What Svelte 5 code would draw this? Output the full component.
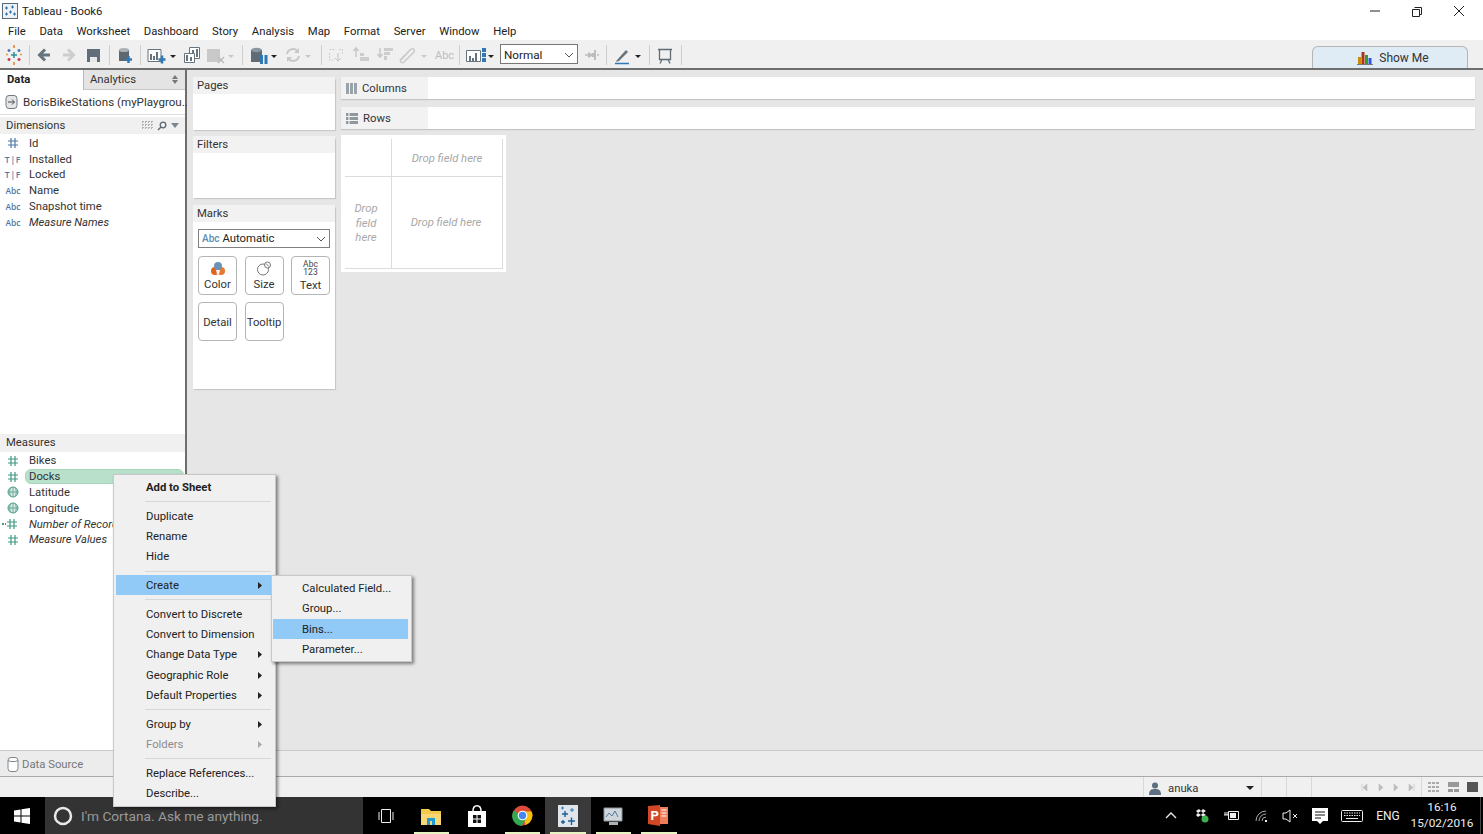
<script>
  const menus = ['File','Data','Worksheet','Dashboard','Story','Analysis','Map','Format','Server','Window','Help'];
  const dims = [
    {t:'#',n:'Id'},{t:'tf',n:'Installed'},{t:'tf',n:'Locked'},{t:'abc',n:'Name'},{t:'abc',n:'Snapshot time'},{t:'abc',n:'Measure Names',i:true}
  ];
  const meas = [
    {t:'#',n:'Bikes'},{t:'#',n:'Docks',sel:true},{t:'globe',n:'Latitude'},{t:'globe',n:'Longitude'},{t:'#e',n:'Number of Records',i:true},{t:'#',n:'Measure Values',i:true}
  ];
  const menuGroups = [
    [{n:'Add to Sheet',b:true}],
    [{n:'Duplicate'},{n:'Rename'},{n:'Hide'}],
    [{n:'Create',a:true,h:true}],
    [{n:'Convert to Discrete'},{n:'Convert to Dimension'},{n:'Change Data Type',a:true},{n:'Geographic Role',a:true},{n:'Default Properties',a:true}],
    [{n:'Group by',a:true},{n:'Folders',a:true,d:true}],
    [{n:'Replace References...'},{n:'Describe...'}]
  ];
  const sub = [{n:'Calculated Field...'},{n:'Group...'},{n:'Bins...',h:true},{n:'Parameter...'}];
</script>

{#snippet hash(color)}
  <svg class="ficon" width="14" height="12" viewBox="0 0 14 12"><path d="M2 4h10M2 8h10M5 1v10M9 1v10" stroke={color} stroke-width="1.2" fill="none"/></svg>
{/snippet}

{#snippet fieldIcon(t, blue)}
  <span class="fslot">
    {#if t === '#'}
      {@render hash(blue ? '#4e79a7' : '#3f9a82')}
    {:else if t === '#e'}
      <svg class="ficon wide" width="18" height="12" viewBox="0 0 18 12"><path d="M1 5h2v2H1zM4 5h1v2H4z" fill="#3f9a82"/><path d="M6 4h10M6 8h10M9 1v10M13 1v10" stroke="#3f9a82" stroke-width="1.2" fill="none"/></svg>
    {:else if t === 'globe'}
      <svg class="ficon" width="14" height="12" viewBox="0 0 14 12"><circle cx="7" cy="6" r="5" fill="#dcebe6" stroke="#4f9d88"/><path d="M2 6h10M7 1v10M4.500 2c-1 2.500-1 5.500 0 8M9.500 2c1 2.500 1 5.500 0 8" stroke="#4f9d88" stroke-width=".8" fill="none"/></svg>
    {:else if t === 'tf'}
      <span class="tf">T|F</span>
    {:else}
      <span class="abc">Abc</span>
    {/if}
  </span>
{/snippet}

<div class="win">
  <div class="title">
    <svg class="appicon" width="16" height="16" viewBox="0 0 16 16"><rect x=".5" y=".5" width="15" height="15" fill="#eef1f5" stroke="#5b6b7c"/><path d="M3 5h3M4.500 3.500v3M9 4h3M10.500 2.500v3M7 9h3M8.500 7.500v3M3 11h3M4.500 9.500v3M11 11h3M12.500 9.500v3" stroke="#2c6fa8"/></svg>
    <span>Tableau - Book6</span>
    <div class="winbtns">
      <svg width="42" height="20" viewBox="0 0 42 20"><path d="M16 10h10" stroke="#222"/></svg>
      <svg width="42" height="20" viewBox="0 0 42 20"><path d="M18.500 6.500h7v7h-2M16.500 8.500h7v7h-7z" stroke="#222" fill="#fff"/></svg>
      <svg width="42" height="20" viewBox="0 0 42 20"><path d="M16 5l10 10M26 5L16 15" stroke="#222"/></svg>
    </div>
  </div>
  <div class="menubar">
    {#each menus as m}<span class="mi">{m}</span>{/each}
  </div>
  <div class="toolbar">
    <svg width="500" height="28" viewBox="0 0 500 28" class="strip">
      <g stroke-width="1.500" fill="none">
        <path d="M14 5v3M14 22v3" stroke="#e8792b"/><path d="M9 9v3M7.500 10.500h3M19 9v3M17.500 10.500h3" stroke="#4e79a7"/>
        <path d="M9 18v3M7.500 19.500h3M19 18v3M17.500 19.500h3" stroke="#c8374a"/><path d="M11 15h6M14 12v6" stroke="#2c8f96"/>
        <path d="M8 14.500h-2M22 14.500h-2" stroke="#e0a030"/>
      </g>
      <path d="M29.500 5v20M109.500 5v20M140.500 5v20M242.500 5v20M321.500 5v20M459.500 5v20" stroke="#cfcfcf"/>
      <path d="M50 15H40M45 9.500L39.500 15l5.500 5.500" stroke="#66747f" stroke-width="3" fill="none"/>
      <path d="M63 15h10M68 9.500l5.500 5.500-5.500 5.500" stroke="#cdcdcd" stroke-width="3" fill="none"/>
      <path d="M87 9h13v13H87z" fill="#616e79"/><path d="M90 17h7v5h-7z" fill="#e8e8e8"/>
      <path d="M119 10h10v11h-10z" fill="#5c6770"/><ellipse cx="124" cy="10" rx="5" ry="2" fill="#aab1b7"/>
      <path d="M128.500 16v7M125 19.500h7" stroke="#2f78b5" stroke-width="2.500"/>
      <path d="M148 9.500h13v12h-13z" fill="#fff" stroke="#66747f"/><path d="M150 14h2v6h-2zM153 16h2v4h-2zM156 12h2v8h-2z" fill="#66747f"/>
      <path d="M162 15.500v8M158.500 19.500h7" stroke="#2f78b5" stroke-width="2.500"/>
      <path d="M170 15h6l-3 3z" fill="#222"/>
      <path d="M189.500 7.500h10v11h-10z" fill="#fff" stroke="#66747f"/><path d="M184.500 13.500h10v9h-10z" fill="#fff" stroke="#66747f"/>
      <path d="M186 15h2v6h-2zM190 17h2v4h-2zM192 10h2v3h-2zM196 9h2v8h-2z" fill="#66747f"/>
      <path d="M207 9h13v13h-13z" fill="#c9c9c9"/><path d="M218 17l6 6M224 17l-6 6" stroke="#bdbdbd" stroke-width="1.500"/>
      <path d="M228 15h6l-3 3z" fill="#c8c8c8"/>
      <path d="M251 10h11v12h-11z" fill="#5f6b75"/><ellipse cx="256.500" cy="10" rx="5.500" ry="2.200" fill="#8b959d"/>
      <path d="M260 15h3v9h-3zM264.500 15h3v9h-3z" fill="#2f78b5"/>
      <path d="M271 15h6l-3 3z" fill="#222"/>
      <path d="M287 14a6 6 0 0 1 11-2M299 16a6 6 0 0 1-11 2" stroke="#c9c9c9" stroke-width="2" fill="none"/><path d="M299 8v5h-5zM287 22v-5h5z" fill="#c9c9c9"/>
      <path d="M305 15h6l-3 3z" fill="#c8c8c8"/>
      <path d="M329.500 9.500h6M339 9.500h3.500v5M329.500 13v7h4" stroke="#cfcfcf" stroke-dasharray="2 1" fill="none"/><path d="M338 13v8M335 18l3 3 3-3" stroke="#c4c4c4" fill="none"/>
      <path d="M356 8v9M353.500 11l2.500-3 2.500 3" stroke="#c8c8c8" stroke-width="1.500" fill="none"/><path d="M360 13h4v3h-4zM360 17h9v4h-9z" fill="#cdcdcd"/>
      <path d="M380 8v9M377.500 14l2.500 3 2.500-3" stroke="#c8c8c8" stroke-width="1.500" fill="none"/><path d="M384 8h9v3h-9zM384 12h6v3h-6zM384 16h3v4h-3z" fill="#cdcdcd"/>
      <path d="M401 20l9-10c3-3 6 0 3 3l-9 9c-2 2-5-1-3-3l8-8" stroke="#c9c9c9" stroke-width="1.400" fill="none"/>
      <path d="M421 15h6l-3 3z" fill="#c8c8c8"/>
      <text x="435" y="19" class="abct">Abc</text>
      <path d="M466.500 10.500h14v11h-14z" fill="#fff" stroke="#66747f"/><path d="M469 16h2v5h-2zM472 18h2v3h-2zM475 13h2v8h-2z" fill="#66747f"/>
      <path d="M482 8h4v4h-4zM482 13h4v4h-4zM482 18h4v4h-4z" fill="#2f78b5"/>
      <path d="M488 15h6l-3 3z" fill="#222"/>
    </svg>
    <div class="normal"><span>Normal</span>
      <svg width="10" height="6" viewBox="0 0 10 6"><path d="M1 1l4 4 4-4" stroke="#555" fill="none"/></svg>
    </div>
    <svg width="110" height="28" viewBox="578 0 110 28" class="strip">
      <path d="M585 15h3M597 15h2" stroke="#bdbdbd" stroke-width="1.500"/><path d="M588 12l4 2v2l-4 2zM594 10h2v10h-2zM592 13h2v4h-2z" fill="#bdbdbd"/>
      <path d="M606.500 5v20M649.500 5v20M681.500 5v20" stroke="#cfcfcf"/>
      <path d="M617 20l9-10 2 2-9 9-3 1z" fill="#66747f"/><path d="M615 23.500h14" stroke="#2f78b5" stroke-width="1.500"/>
      <path d="M635 15h6l-3 3z" fill="#222"/>
      <path d="M658 9.500h14M659.500 10v9.500h11V10M662 19.500l-2 4M668 19.500l2 4" stroke="#5f6b75" stroke-width="1.300" fill="none"/>
    </svg>
    <div class="showme">
      <svg width="16" height="14" viewBox="0 0 16 14"><path d="M1 6h3v7H1z" fill="#c98a10"/><path d="M4.500 1h3v12h-3z" fill="#b0341a"/><path d="M8 4h3v9H8z" fill="#2da02d"/><path d="M11.500 7h3v6h-3z" fill="#3252e0"/><path d="M0 13.500h16" stroke="#777"/></svg>
      <span>Show Me</span>
    </div>
  </div>

  <div class="body">
    <aside class="left">
      <div class="tabs">
        <div class="tab on">Data</div>
        <div class="tab off">Analytics<svg width="6" height="9" viewBox="0 0 6 9"><path d="M0 4l3-4 3 4zM0 5l3 4 3-4z" fill="#777"/></svg></div>
      </div>
      <div class="source">
        <svg width="14" height="14" viewBox="0 0 14 14"><rect x="1" y=".5" width="11" height="13" rx="3" fill="#e6e6e6" stroke="#6f7a84"/><path d="M3 7h6M7 4.500L9.500 7 7 9.500" stroke="#3f4a54" fill="none"/></svg>
        <span>BorisBikeStations (myPlaygrou...</span>
      </div>
      <div class="sect dims">
        <div class="shead"><span>Dimensions</span>
          <span class="tools">
            <svg width="11" height="9" viewBox="0 0 11 9"><path d="M0 .5h11M0 3.500h11M0 6.500h11M.5 0v8M3.500 0v8M6.500 0v8M9.500 0v8" stroke="#b0b0b0" stroke-dasharray="2 1"/></svg>
            <svg width="10" height="10" viewBox="0 0 10 10"><circle cx="6" cy="4" r="2.800" stroke="#5c6770" fill="none" stroke-width="1.300"/><path d="M4 6L1 9" stroke="#5c6770" stroke-width="1.500"/></svg>
            <svg width="8" height="5" viewBox="0 0 8 5"><path d="M0 0h8L4 5z" fill="#7c8790"/></svg>
          </span>
        </div>
        {#each dims as f}
          <div class="field">
            {@render fieldIcon(f.t, true)}
            <span class="fname" class:it={f.i}>{f.n}</span>
          </div>
        {/each}
      </div>
      <div class="sect meas">
        <div class="shead"><span>Measures</span></div>
        {#each meas as f}
          <div class="field">
            {@render fieldIcon(f.t, false)}
            <span class="fname" class:it={f.i} class:sel={f.sel}>{f.n}</span>
          </div>
        {/each}
      </div>
    </aside>
    <main class="work">
      <div class="cards">
        <section class="card pages"><h4>Pages</h4></section>
        <section class="card filters"><h4>Filters</h4></section>
        <section class="card marks">
          <h4>Marks</h4>
          <div class="mdrop"><span class="abc2">Abc</span><span>Automatic</span>
            <svg width="10" height="6" viewBox="0 0 10 6"><path d="M1 1l4 4 4-4" stroke="#555" fill="none"/></svg>
          </div>
          <div class="mgrid">
            <div class="mbtn">
              <svg width="16" height="15" viewBox="0 0 16 15"><circle cx="5" cy="10" r="4" fill="#e0641e"/><circle cx="11" cy="10" r="4" fill="#e8782b"/><path d="M6 9h4l-1 4H7z" fill="#f7f7f7"/><circle cx="8" cy="5" r="4" fill="#6b93b8"/></svg>
              <span>Color</span>
            </div>
            <div class="mbtn">
              <svg width="16" height="15" viewBox="0 0 16 15"><circle cx="7" cy="8.500" r="5.500" fill="none" stroke="#777"/><circle cx="11.500" cy="4" r="3" fill="#fff" stroke="#777"/><path d="M10 2.500l3 3" stroke="#777"/></svg>
              <span>Size</span>
            </div>
            <div class="mbtn">
              <span class="a123"><span>Abc</span><span>123</span></span>
              <span>Text</span>
            </div>
            <div class="mbtn low"><span>Detail</span></div>
            <div class="mbtn low"><span>Tooltip</span></div>
          </div>
        </section>
      </div>
      <div class="canvas">
        <div class="shelf"><span class="slabel"><svg width="11" height="11" viewBox="0 0 11 11"><path d="M0 0h3v11H0zM4 0h3v11H4zM8 0h3v11H8z" fill="#9aa3aa"/></svg>Columns</span></div>
        <div class="shelf"><span class="slabel"><svg width="12" height="11" viewBox="0 0 12 11"><path d="M0 0h12v3H0zM0 4h12v3H0zM0 8h12v3H0z" fill="#8f989f"/><path d="M3 0v11" stroke="#fff"/></svg>Rows</span></div>
        <div class="viz">
          <div class="cell c1"></div>
          <div class="cell c2">Drop field here</div>
          <div class="cell c3"><span>Drop</span><span>field</span><span>here</span></div>
          <div class="cell c4">Drop field here</div>
        </div>
      </div>
    </main>
  </div>

  <div class="sheetbar">
    <span class="dsrc">
      <svg width="12" height="15" viewBox="0 0 12 15"><rect x="1" y=".5" width="10" height="14" rx="3" fill="#fff" stroke="#7c868e"/><path d="M1 3.500c2 1.500 8 1.500 10 0" stroke="#7c868e" fill="none"/></svg>
      <span>Data Source</span>
    </span>
  </div>
  <div class="status">
    <span class="gap1"></span>
    <span class="user">
      <svg width="12" height="13" viewBox="0 0 12 13"><circle cx="6" cy="3.500" r="3" fill="#5d6f80"/><path d="M0 13c0-5 2-6 6-6s6 1 6 6z" fill="#5d6f80"/></svg>
      <span>anuka</span>
      <svg class="push" width="8" height="4" viewBox="0 0 8 4"><path d="M0 0h8L4 4z" fill="#222"/></svg>
    </span>
    <span class="sb s25"></span>
    <span class="sb s25"></span>
    <span class="sb nav">
      <svg width="110" height="19" viewBox="0 0 110 19">
        <path d="M50 6v7M51 9.500l4-3.500v7zM71 9.500L67 6v7zM82 6l4 3.500-4 3.500zM97 6l4 3.500-4 3.500zM102 6v7" fill="#bcbcbc" stroke="#bcbcbc" stroke-width=".6"/>
      </svg>
    </span>
    <span class="sb views">
      <svg width="60" height="12" viewBox="0 0 60 12"><path d="M6 1h3v2H6zM10 1h3v2h-3zM14 1h3v2h-3zM6 5h3v2H6zM10 5h3v2h-3zM14 5h3v2h-3zM6 9h3v2H6zM10 9h3v2h-3zM14 9h3v2h-3z" fill="#aaa"/><path d="M26 1h11v5H26zM26 8h5v3h-5zM32 8h5v3h-5z" fill="#999"/><path d="M45 1h11v10H45z" fill="#555"/></svg>
    </span>
  </div>

  <div class="taskbar">
    <div class="start">
      <svg width="16" height="16" viewBox="0 0 16 16"><path d="M0 2.500l6.500-1v6H0zM7.500 1.300L16 0v7.500H7.500zM0 8.500h6.500v6l-6.500-1zM7.500 8.500H16V16l-8.500-1.300z" fill="#fff"/></svg>
    </div>
    <div class="cortana">
      <svg width="20" height="20" viewBox="0 0 20 20"><circle cx="10" cy="10" r="8" fill="none" stroke="#e8e8e8" stroke-width="2.500"/></svg>
      <span>I'm Cortana. Ask me anything.</span>
    </div>
    <div class="tk">
      <svg width="20" height="16" viewBox="0 0 20 16"><path d="M5.500 1.500h9v13h-9zM3 4v8M17 4v8" stroke="#eee" fill="none"/></svg>
    </div>
    <div class="tk run">
      <svg width="22" height="20" viewBox="0 0 22 20"><path d="M1 3h8l2 2h10v14H1z" fill="#f2c94c"/><path d="M1 8h20v11H1z" fill="#f7d774"/><path d="M7 12h8v7h-3v-4h-2v4H7z" fill="#1c9ad6"/></svg>
    </div>
    <div class="tk">
      <svg width="20" height="22" viewBox="0 0 20 22"><path d="M1 6h18v16H1z" fill="#fff"/><path d="M6 6c0-7 8-7 8 0" stroke="#fff" stroke-width="1.500" fill="none"/><path d="M6 10h3.500v3.500H6zM10.500 10H14v3.500h-3.500zM6 14.500h3.500V18H6zM10.500 14.500H14V18h-3.500z" fill="#111"/></svg>
    </div>
    <div class="tk run">
      <svg width="21" height="21" viewBox="0 0 21 21"><circle cx="10.500" cy="10.500" r="10" fill="#dd4b39"/><path d="M10.500 6.500h9a10 10 0 0 1-6 13.500z" fill="#f4c20d"/><path d="M1.800 5.500a10 10 0 0 0 8 15.500l4-7z" fill="#34a853"/><circle cx="10.500" cy="10.500" r="4.800" fill="#fff"/><circle cx="10.500" cy="10.500" r="3.700" fill="#4285f4"/></svg>
    </div>
    <div class="tk run active">
      <svg width="20" height="22" viewBox="0 0 20 22"><path d="M0 0h20v22H0z" fill="#dfe5ea"/><g stroke="#1c5f96" stroke-width="1.400"><path d="M4 9h6M7 6v6M10 16h7M13.500 12.500V20M3 17h4M5 15v4"/></g><g stroke="#2f7db5"><path d="M12 5h4M14 3v4M3 3h3M4.500 1.500v3"/></g></svg>
    </div>
    <div class="tk run">
      <svg width="20" height="20" viewBox="0 0 20 20"><path d="M1 2h18v13H1z" fill="#cfd6dc" stroke="#8a949c"/><path d="M3 11l3-4 3 3 3-5 3 6" stroke="#4f7ba0" fill="none"/><path d="M6 16h9v3H6z" fill="#aab1b7"/></svg>
    </div>
    <div class="tk run">
      <svg width="21" height="21" viewBox="0 0 21 21"><path d="M7 2h13v17H7z" fill="#ef7d5a"/><path d="M0 1l12-1v21L0 19z" fill="#d24726"/><path d="M13.500 5h5M13.500 8h5M13.500 11h5" stroke="#fff"/><text x="2.500" y="15" class="pp">P</text></svg>
    </div>
    <div class="tray">
      <svg width="30" height="37" viewBox="0 0 30 37"><path d="M10 21l5-5 5 5" stroke="#eee" stroke-width="1.300" fill="none"/></svg>
      <svg width="30" height="37" viewBox="0 0 30 37"><path d="M10 14l3-2 2 2-3 2zM15 14l2-2 3 2-3 2zM10 18l2-2 3 2-3 2zM15 18l2-2 3 2-3 2z" fill="#eee"/><circle cx="19" cy="22" r="3.500" fill="#3cb04a"/></svg>
      <svg width="30" height="37" viewBox="0 0 30 37"><path d="M12.500 14.500h10v8h-10z" stroke="#eee" fill="none"/><path d="M14 16h6v5h-6z" fill="#eee"/><path d="M8 18h4M9 15v3M11 15v3" stroke="#eee"/></svg>
      <svg width="31" height="37" viewBox="0 0 31 37"><path d="M10 24a10 10 0 0 1 10-10M13 24a7 7 0 0 1 7-7M16 24a4 4 0 0 1 4-4" stroke="#aaa" fill="none"/><path d="M19 23h2v2h-2z" fill="#eee"/></svg>
      <svg width="27" height="37" viewBox="0 0 27 37"><path d="M6 16h3l4-3v12l-4-3H6z" stroke="#eee" fill="none"/><path d="M16 17l4 4M20 17l-4 4" stroke="#eee"/></svg>
      <svg width="32" height="37" viewBox="0 0 32 37"><path d="M8 11h16v13h-5l-3 3-3-3H8z" fill="#fff"/><path d="M11 15h10M11 18h10M11 21h6" stroke="#111"/></svg>
      <svg width="32" height="37" viewBox="0 0 32 37"><rect x="5.500" y="13.500" width="21" height="11" rx="1" stroke="#eee" fill="none"/><path d="M8 16h16M8 18.500h16" stroke="#eee" stroke-dasharray="1.500 1"/><path d="M10 21.500h12" stroke="#eee"/></svg>
      <span class="eng">ENG</span>
      <span class="clock"><span>16:16</span><span>15/02/2016</span></span>
      <span class="desk"></span>
    </div>
  </div>

  <div class="menu ctx">
    {#each menuGroups as g, gi}
      {#if gi > 0}<div class="msep"></div>{/if}
      {#each g as it}
        <div class="mrow" class:hl={it.h} class:bold={it.b} class:dis={it.d}>
          <span>{it.n}</span>
          {#if it.a}<svg width="4" height="7" viewBox="0 0 4 7"><path d="M0 0l4 3.500L0 7z" fill={it.d ? '#aaa' : '#222'}/></svg>{/if}
        </div>
      {/each}
    {/each}
  </div>
  <div class="menu submenu">
    {#each sub as it}
      <div class="mrow" class:hl={it.h}><span>{it.n}</span></div>
    {/each}
  </div>
</div>

<style>
  :global(body) { margin: 0; overflow: hidden; }
  .win {
    position: relative; width: 1483px; height: 834px; overflow: hidden;
    display: flex; flex-direction: column; background: #fff; color: #333;
    font-family: Roboto, "Open Sans", "Liberation Sans", sans-serif; font-size: 11.300px;
  }
  svg { display: block; flex: none; }

  .title { height: 22px; display: flex; align-items: center; padding-left: 2px; color: #222; }
  .appicon { margin-right: 4px; }
  .winbtns { margin-left: auto; display: flex; margin-right: 3px; }

  .menubar { height: 18px; display: flex; align-items: center; padding-left: 8px; gap: 13.700px; color: #222; }

  .toolbar {
    height: 30px; box-sizing: border-box; background: #f0f0f0; display: flex; align-items: center; position: relative;
    border-bottom: 2px solid #6e6e6e;
  }
  .strip { height: 28px; }
  .abct { font: 11px Roboto, sans-serif; fill: #bdbdbd; }
  .pp { font: 700 13px Roboto, sans-serif; fill: #fff; }
  .normal {
    box-sizing: border-box; width: 78px; height: 20px; background: #fff; border: 1px solid #777;
    display: flex; align-items: center; justify-content: space-between; padding: 1px 3px 0; color: #222; font-size: 11.700px;
  }
  .showme {
    margin-left: auto; margin-right: 15px; margin-top: 6px; box-sizing: border-box; width: 156px; height: 22px;
    background: #dfebf5; border: 1px solid #b5b5b5; border-bottom: 0; border-radius: 6px 6px 0 0;
    display: flex; align-items: center; justify-content: center; gap: 6px; padding-left: 6px; font-size: 12px;
  }

  .body { flex: 1; min-height: 0; display: flex; }
  .left {
    box-sizing: border-box; width: 187px; background: #fff; border-right: 2px solid #6e6e6e;
    display: flex; flex-direction: column;
  }
  .tabs { height: 20px; display: flex; }
  .tab { display: flex; align-items: center; height: 19px; box-sizing: border-box; }
  .tab.on { width: 83px; padding-left: 7px; font-weight: 700; color: #222; }
  .tab.off { flex: 1; padding-left: 6px; height: 20px; padding-bottom: 1px; background: #e4e4e4; border-left: 1px solid #b8b8b8; justify-content: space-between; padding-right: 7px; border-bottom: 1px solid #c8c8c8; }
  .source { height: 25px; display: flex; align-items: center; gap: 4px; padding: 0 0 1px 5px; border-bottom: 1px solid #ddd; box-sizing: border-box; white-space: nowrap; color: #333; font-size: 11.600px; }
  .sect { display: flex; flex-direction: column; }
  .dims { padding-top: 2px; height: 319px; box-sizing: border-box; flex: none; }
  .shead {
    height: 17px; background: #f0f0f0; display: flex; align-items: center; justify-content: space-between;
    padding: 0 6px; flex: none; margin-bottom: 1.500px;
  }
  .meas .shead { height: 18px; margin-bottom: 1px; padding-bottom: 1px; box-sizing: border-box; }
  .field { height: 15.800px; display: flex; align-items: center; position: relative; flex: none; }
  .tools { display: flex; align-items: center; gap: 4px; }
  .fslot { width: 29px; display: flex; justify-content: center; padding-right: 3px; box-sizing: border-box; flex: none; }
  .ficon.wide { margin-left: -6px; }
  .tf { font: 600 8.500px "Open Sans", sans-serif; color: #4e79a7; letter-spacing: .8px; }
  .abc { font: 600 8.500px "Open Sans", sans-serif; color: #4e79a7; }
  .fname { white-space: nowrap; color: #333; }
  .fname.it { font-style: italic; }
  .fname.sel {
    background: #b9e0cb; border-radius: 6px; width: 159px; margin-left: -4px; padding-left: 3px; box-sizing: border-box;
    border: 1px solid #a6d6bb; height: 15px; display: flex; align-items: center;
  }

  .work { flex: 1; background: #e6e6e6; display: flex; padding: 7px 8px 0 6px; gap: 6px; min-width: 0; }
  .cards { width: 142px; display: flex; flex-direction: column; flex: none; }
  .card { background: #fff; border-radius: 4px 4px 0 0; box-shadow: 1px 1px 1px #c4c4c4; }
  .card h4 { margin: 0; height: 17px; box-sizing: border-box; padding: 0 0 1px 4px; background: #f2f2f2; font-weight: 400; font-size: 11.300px; display: flex; align-items: center; }
  .pages { height: 53px; }
  .filters { height: 62px; margin-top: 6px; }
  .marks { height: 184px; margin-top: 7px; }
  .mdrop {
    margin: 7px 5px 0; box-sizing: border-box; height: 19px; padding: 0 3px; border: 1px solid #808080; display: flex; align-items: center;
    gap: 3px; color: #222;
  }
  .mdrop svg { margin-left: auto; }
  .abc2 { color: #5b8db5; font-size: 10px; font-weight: 500; }
  .mgrid { margin: 8px 5px 0; display: grid; grid-template-columns: repeat(3, 39px); column-gap: 7.500px; row-gap: 7px; }
  .mbtn {
    box-sizing: border-box; height: 39px; border: 1px solid #b5b5b5; border-radius: 4px;
    display: flex; flex-direction: column; align-items: center; justify-content: center; gap: 2px; color: #333;
  }
  .mbtn.low { padding-top: 2px; }
  .a123 { font-size: 8.500px; line-height: 8.500px; display: flex; flex-direction: column; align-items: center; color: #444; }

  .canvas { flex: 1; min-width: 0; display: flex; flex-direction: column; }
  .shelf { height: 22px; background: #fff; box-shadow: 0 1px 1px #c4c4c4; display: flex; margin-bottom: 8px; }
  .slabel { width: 87px; background: #f2f2f2; display: flex; align-items: center; gap: 5px; padding: 1px 0 0 5px; box-sizing: border-box; }
  .viz {
    box-sizing: border-box; margin-top: -2px; width: 165px; height: 137px; background: #fff; padding: 4px 3px 3px 4px;
    display: grid; grid-template-columns: 47px 1fr; grid-template-rows: 38px 92px;
    color: #a8a8a8; font-style: italic;
  }
  .cell { display: flex; align-items: center; justify-content: center; text-align: center; border-right: 1px solid #dcdcdc; border-bottom: 1px solid #dcdcdc; }
  .c2 { padding-top: 2px; }
  .c3 { flex-direction: column; line-height: 14.500px; padding: 3px 4px 0 0; }
  .c4 { padding-right: 2px; }

  .sheetbar {
    height: 27px; box-sizing: border-box; background: #ececec; border-top: 1px solid #c9c9c9; border-bottom: 1px solid #a9a9a9;
    display: flex; align-items: center; padding-left: 7px; flex: none;
  }
  .dsrc { display: flex; align-items: center; gap: 3px; color: #777; padding-top: 1px; }
  .status { height: 20px; background: #f0f0f0; display: flex; box-sizing: border-box; flex: none; }
  .gap1 { width: 1143px; flex: none; }
  .user {
    width: 118px; box-sizing: border-box; border-left: 1px solid #d8d8d8; display: flex; align-items: center; padding: 2px 7px 0 5px; gap: 7px; color: #333;
  }
  .push { margin-left: auto; }
  .sb { border-left: 1px solid #d8d8d8; display: flex; align-items: center; box-sizing: border-box; }
  .s25 { width: 25px; }
  .nav { width: 110px; }
  .views { flex: 1; }

  .taskbar { height: 37px; background: #000; display: flex; flex: none; color: #eee; }
  .start { width: 45px; display: flex; align-items: center; justify-content: center; padding-right: 1px; box-sizing: border-box; }
  .cortana {
    width: 318px; background: #333; display: flex; align-items: center; gap: 8px; padding-left: 8px; box-sizing: border-box;
    color: #9a9a9a; font-size: 13.700px; white-space: nowrap;
  }
  .tk { width: 45.500px; display: flex; align-items: center; justify-content: center; position: relative; }
  .run::after {
    content: ""; position: absolute; left: 5px; right: 5px; bottom: 0; height: 2px; background: #e6f4c4;
  }
  .active { background: #3a3a3a; }
  .tray { margin-left: auto; display: flex; align-items: center; height: 37px; }
  .eng { width: 36px; margin-left: 2px; text-align: center; font-size: 12px; }
  .clock { width: 72px; display: flex; flex-direction: column; align-items: center; line-height: 16px; padding-bottom: 2px; font-size: 11.800px; }
  .desk { width: 3px; margin-left: 2px; height: 37px; border-left: 1px solid #444; box-sizing: border-box; }

  .menu {
    position: absolute; box-sizing: border-box; background: #f0f0f0; border: 1px solid #c8c8c8;
    box-shadow: 2px 2px 3px rgba(0,0,0,.45); color: #222; display: flex; flex-direction: column;
  }
  .ctx { left: 113px; top: 474px; width: 163px; height: 333px; padding: 2px; }
  .ctx .mrow { padding-left: 30px; }
  .submenu { left: 271px; top: 575px; width: 141px; height: 87px; padding: 2px 3px 2px 1px; }
  .mrow {
    height: 20.300px; flex: none; display: flex; align-items: center; justify-content: space-between;
    padding: 1px 11px 0 29px; box-sizing: border-box; white-space: nowrap;
  }
  .hl { background: #91c9f7; }
  .bold { font-weight: 700; }
  .dis { color: #8c8c8c; }
  .msep { height: 1px; margin: 4px 2px 3.400px 29px; background: #d7d7d7; flex: none; }
</style>
